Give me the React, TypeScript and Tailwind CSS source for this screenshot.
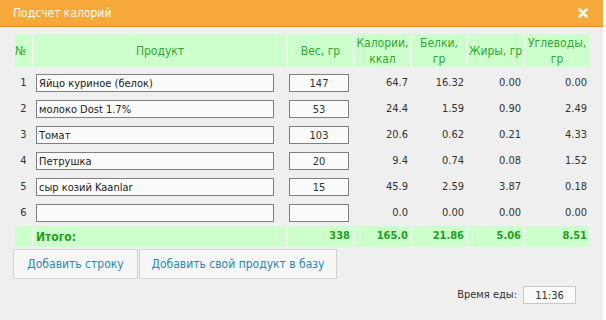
import React from "react";

const rows = [
  { n: 1, name: "Яйцо куриное (белок)", w: "147", k: "64.7", b: "16.32", f: "0.00", u: "0.00" },
  { n: 2, name: "молоко Dost 1.7%", w: "53", k: "24.4", b: "1.59", f: "0.90", u: "2.49" },
  { n: 3, name: "Томат", w: "103", k: "20.6", b: "0.62", f: "0.21", u: "4.33" },
  { n: 4, name: "Петрушка", w: "20", k: "9.4", b: "0.74", f: "0.08", u: "1.52" },
  { n: 5, name: "сыр козий Kaanlar", w: "15", k: "45.9", b: "2.59", f: "3.87", u: "0.18" },
  { n: 6, name: "", w: "", k: "0.0", b: "0.00", f: "0.00", u: "0.00" },
];

const grid = "grid grid-cols-[17px_252px_65px_55px_54px_55px_64px] gap-x-[2px]";

export default function App() {
  return (
    <div
      className="w-[606px] h-[320px] bg-white overflow-hidden"
      style={{ fontFamily: '"DejaVu Sans Condensed", "DejaVu Sans", sans-serif' }}
    >
      <div className="w-[603px] h-[320px] bg-[#efefef] flex flex-col">
        <div className="h-[27px] shrink-0 bg-[#f7a83a] border-b border-[#e4921f] flex items-center justify-between pl-[13px] pr-[15px]">
          <span className="text-white text-[12px] leading-none">Подсчет калорий</span>
          <svg width="10" height="10" viewBox="0 0 10 10">
            <path d="M1.5 1.5 L8.5 8.5 M8.5 1.5 L1.5 8.5" stroke="white" strokeWidth="2.6" strokeLinecap="round" />
          </svg>
        </div>

        <div className="pl-[15px] pt-[7px]">
          <div className={`${grid} h-[33px] text-[12px] text-[#2faa2f] leading-[16px] text-center`}>
            <div className="bg-[#ccffcc] flex items-center">№</div>
            <div className="bg-[#ccffcc] flex items-center justify-center">Продукт</div>
            <div className="bg-[#ccffcc] flex items-center justify-center">Вес, гр</div>
            <div className="bg-[#ccffcc] flex items-center justify-center">Калории,<br />ккал</div>
            <div className="bg-[#ccffcc] flex items-center justify-center">Белки,<br />гр</div>
            <div className="bg-[#ccffcc] flex items-center justify-center">Жиры, гр</div>
            <div className="bg-[#ccffcc] flex items-center justify-center">Углеводы,<br />гр</div>
          </div>

          <div className="flex flex-col gap-y-[2px] mt-[2px] text-[11px] text-[#333]">
            {rows.map((r) => (
              <div key={r.n} className={`${grid} h-[24px] pt-[5px]`}>
                <div className="flex items-center justify-center h-[18px]">{r.n}</div>
                <div className="pl-[2px]">
                  <input
                    readOnly
                    value={r.name}
                    className="w-[238px] h-[18px] border border-[#808080] bg-[#fafafa] px-[2px] text-[11px] text-[#222] outline-none"
                  />
                </div>
                <div className="pl-[1px]">
                  <input
                    readOnly
                    value={r.w}
                    className="w-[60px] h-[18px] border border-[#808080] bg-[#fafafa] text-center text-[11px] text-[#333] outline-none"
                  />
                </div>
                <div className="h-[18px] flex items-center justify-end pr-[2px]">{r.k}</div>
                <div className="h-[18px] flex items-center justify-end pr-[2px]">{r.b}</div>
                <div className="h-[18px] flex items-center justify-end pr-[2px]">{r.f}</div>
                <div className="h-[18px] flex items-center justify-end pr-[2px]">{r.u}</div>
              </div>
            ))}
            <div className={`${grid} h-[21px] mt-[1px] text-[11px] font-bold text-[#22a022]`}>
              <div className="bg-[#ccffcc]"></div>
              <div className="bg-[#ccffcc] flex items-center pl-[2px] text-[12px]">Итого:</div>
              <div className="bg-[#ccffcc] flex items-center justify-end pr-[3px]">338</div>
              <div className="bg-[#ccffcc] flex items-center justify-end pr-[2px]">165.0</div>
              <div className="bg-[#ccffcc] flex items-center justify-end pr-[2px]">21.86</div>
              <div className="bg-[#ccffcc] flex items-center justify-end pr-[2px]">5.06</div>
              <div className="bg-[#ccffcc] flex items-center justify-end pr-[2px]">8.51</div>
            </div>
          </div>
        </div>

        <div className="flex gap-[1px] pl-[13px] mt-[2px]">
          <button className="w-[125px] h-[30px] border border-[#d4d4d4] bg-[#f6f6f6] text-[12px] text-[#2c88b8]">
            Добавить строку
          </button>
          <button className="w-[198px] h-[30px] border border-[#d4d4d4] bg-[#f6f6f6] text-[12px] text-[#2c88b8]">
            Добавить свой продукт в базу
          </button>
        </div>

        <div className="flex items-center justify-end gap-[6px] pr-[27px] mt-[7px]">
          <span className="text-[11px] text-[#333]">Время еды:</span>
          <input
            readOnly
            value="11:36"
            className="w-[53px] h-[18px] border border-[#c8c8c8] bg-[#fafafa] text-center text-[11px] text-[#333] outline-none"
          />
        </div>
      </div>
    </div>
  );
}
